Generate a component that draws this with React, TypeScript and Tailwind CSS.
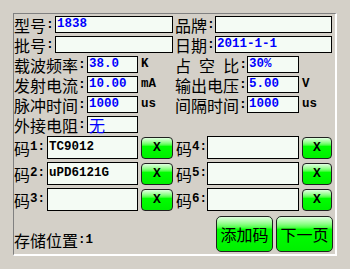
import React from "react";

const cjk = { fontFamily: '"Noto Sans CJK SC", "Noto Sans", sans-serif' };
const mono = { fontFamily: '"Liberation Mono", "DejaVu Sans Mono", monospace' };

const Label = ({ text, w, spaced }: { text: string; w: string; spaced?: boolean }) => (
  <div className={`${w} flex items-center h-full shrink-0`}>
    {spaced ? (
      <span style={cjk} className="flex-1 flex justify-between text-[16px] leading-none text-black">
        {text.split("").map((c, i) => (
          <span key={i}>{c}</span>
        ))}
      </span>
    ) : (
      <span style={cjk} className="text-[16px] leading-none text-black">
        {text}
      </span>
    )}
    <span style={mono} className="text-[13px] font-bold leading-none text-black">
      :
    </span>
  </div>
);

const Field = ({ w, value, cn }: { w: string; value?: string; cn?: boolean }) => (
  <div className={`${w} h-full shrink-0 border border-black bg-[#f4fbf4] flex items-center pl-[1px]`}>
    {value && (
      <span
        style={cn ? cjk : mono}
        className={cn ? "text-[16px] leading-none text-[#0000ff]" : "text-[12.5px] font-bold leading-none text-[#0000ff]"}
      >
        {value}
      </span>
    )}
  </div>
);

const Unit = ({ t }: { t?: string }) => (
  <span style={mono} className="ml-[3px] text-[12.5px] font-bold leading-none text-black">
    {t}
  </span>
);

const XBtn = ({ w }: { w: string }) => (
  <button
    className={`${w} h-[22px] ml-[3px] shrink-0 rounded-[4px] border border-[#202020] bg-gradient-to-b from-[#e0ffe0] via-[#00ff00] via-40% to-[#00f000] flex items-center justify-center`}
  >
    <span style={mono} className="text-[13px] font-bold leading-none text-black">
      X
    </span>
  </button>
);

const CodeRow = ({ n, code, w, bw, first }: { n: string; code?: string; w: string; bw: string; first?: boolean }) => (
  <div className={`flex items-center h-[23px] ${first ? "" : "pl-[1px]"}`}>
    <div className={`${w} flex items-center shrink-0`}>
      <span style={cjk} className="text-[16px] leading-none text-black">
        码
      </span>
      <span style={mono} className="text-[12.5px] font-bold leading-none text-black">
        {n}:
      </span>
    </div>
    <div className={`${bw} h-[23px] shrink-0 border border-black bg-[#f4fbf4] flex items-center pl-[1px]`}>
      {code && (
        <span style={mono} className="text-[12.5px] font-bold leading-none text-black">
          {code}
        </span>
      )}
    </div>
    <XBtn w={first ? "w-[32px]" : "w-[30px]"} />
  </div>
);

const BigBtn = ({ t }: { t: string }) => (
  <button className="w-[57px] h-[36px] rounded-[5px] border border-[#202020] bg-gradient-to-b from-[#e0ffe0] via-[#00ff00] via-35% to-[#00f000] flex items-center justify-center">
    <span style={cjk} className="text-[16px] leading-none text-black">
      {t}
    </span>
  </button>
);

export default function App() {
  return (
    <div className="w-[350px] h-[269px] bg-[#d4d0c8] pt-[13px] pl-[13px] overflow-hidden">
      <div className="w-[324px] h-[243px] border-l border-t border-[#808080] border-r-2 border-b-2 border-r-white border-b-white flex flex-col pt-[2px]">
        <div className="flex flex-col gap-[3px]">
          <div className="flex h-[17px]">
            <div className="w-[161px] flex items-center">
              <Label text="型号" w="w-[41px]" />
              <Field w="w-[118px]" value="1838" />
            </div>
            <div className="flex items-center">
              <Label text="品牌" w="w-[40px]" />
              <Field w="w-[117px]" />
            </div>
          </div>
          <div className="flex h-[17px]">
            <div className="w-[161px] flex items-center">
              <Label text="批号" w="w-[41px]" />
              <Field w="w-[118px]" />
            </div>
            <div className="flex items-center">
              <Label text="日期" w="w-[40px]" />
              <Field w="w-[117px]" value="2011-1-1" />
            </div>
          </div>
          <div className="flex h-[17px]">
            <div className="w-[161px] flex items-center">
              <Label text="载波频率" w="w-[73px]" />
              <Field w="w-[51px]" value="38.0" />
              <Unit t="K" />
            </div>
            <div className="flex items-center">
              <Label text="占空比" w="w-[72px]" spaced />
              <Field w="w-[52px]" value="30%" />
            </div>
          </div>
          <div className="flex h-[17px]">
            <div className="w-[161px] flex items-center">
              <Label text="发射电流" w="w-[73px]" />
              <Field w="w-[51px]" value="10.00" />
              <Unit t="mA" />
            </div>
            <div className="flex items-center">
              <Label text="输出电压" w="w-[72px]" />
              <Field w="w-[52px]" value="5.00" />
              <Unit t="V" />
            </div>
          </div>
          <div className="flex h-[17px]">
            <div className="w-[161px] flex items-center">
              <Label text="脉冲时间" w="w-[73px]" />
              <Field w="w-[51px]" value="1000" />
              <Unit t="us" />
            </div>
            <div className="flex items-center">
              <Label text="间隔时间" w="w-[72px]" />
              <Field w="w-[52px]" value="1000" />
              <Unit t="us" />
            </div>
          </div>
          <div className="flex h-[17px]">
            <div className="w-[161px] flex items-center">
              <Label text="外接电阻" w="w-[73px]" />
              <Field w="w-[51px]" value="无" cn />
            </div>
          </div>

          <div className="flex">
            <div className="w-[161px]">
              <CodeRow n="1" code="TC9012" w="w-[33px]" bw="w-[91px]" first />
            </div>
            <CodeRow n="4" w="w-[31px]" bw="w-[92px]" />
          </div>
          <div className="flex">
            <div className="w-[161px]">
              <CodeRow n="2" code="uPD6121G" w="w-[33px]" bw="w-[91px]" first />
            </div>
            <CodeRow n="5" w="w-[31px]" bw="w-[92px]" />
          </div>
          <div className="flex">
            <div className="w-[161px]">
              <CodeRow n="3" w="w-[33px]" bw="w-[91px]" first />
            </div>
            <CodeRow n="6" w="w-[31px]" bw="w-[92px]" />
          </div>
        </div>

        <div className="flex items-end mt-[5px]">
          <div className="flex items-center mb-[4px] w-[202px]">
            <span style={cjk} className="text-[16px] leading-none text-black">
              存储位置
            </span>
            <span style={mono} className="text-[12.5px] font-bold leading-none text-black">
              :1
            </span>
          </div>
          <div className="flex gap-[3px]">
            <BigBtn t="添加码" />
            <BigBtn t="下一页" />
          </div>
        </div>
      </div>
    </div>
  );
}
